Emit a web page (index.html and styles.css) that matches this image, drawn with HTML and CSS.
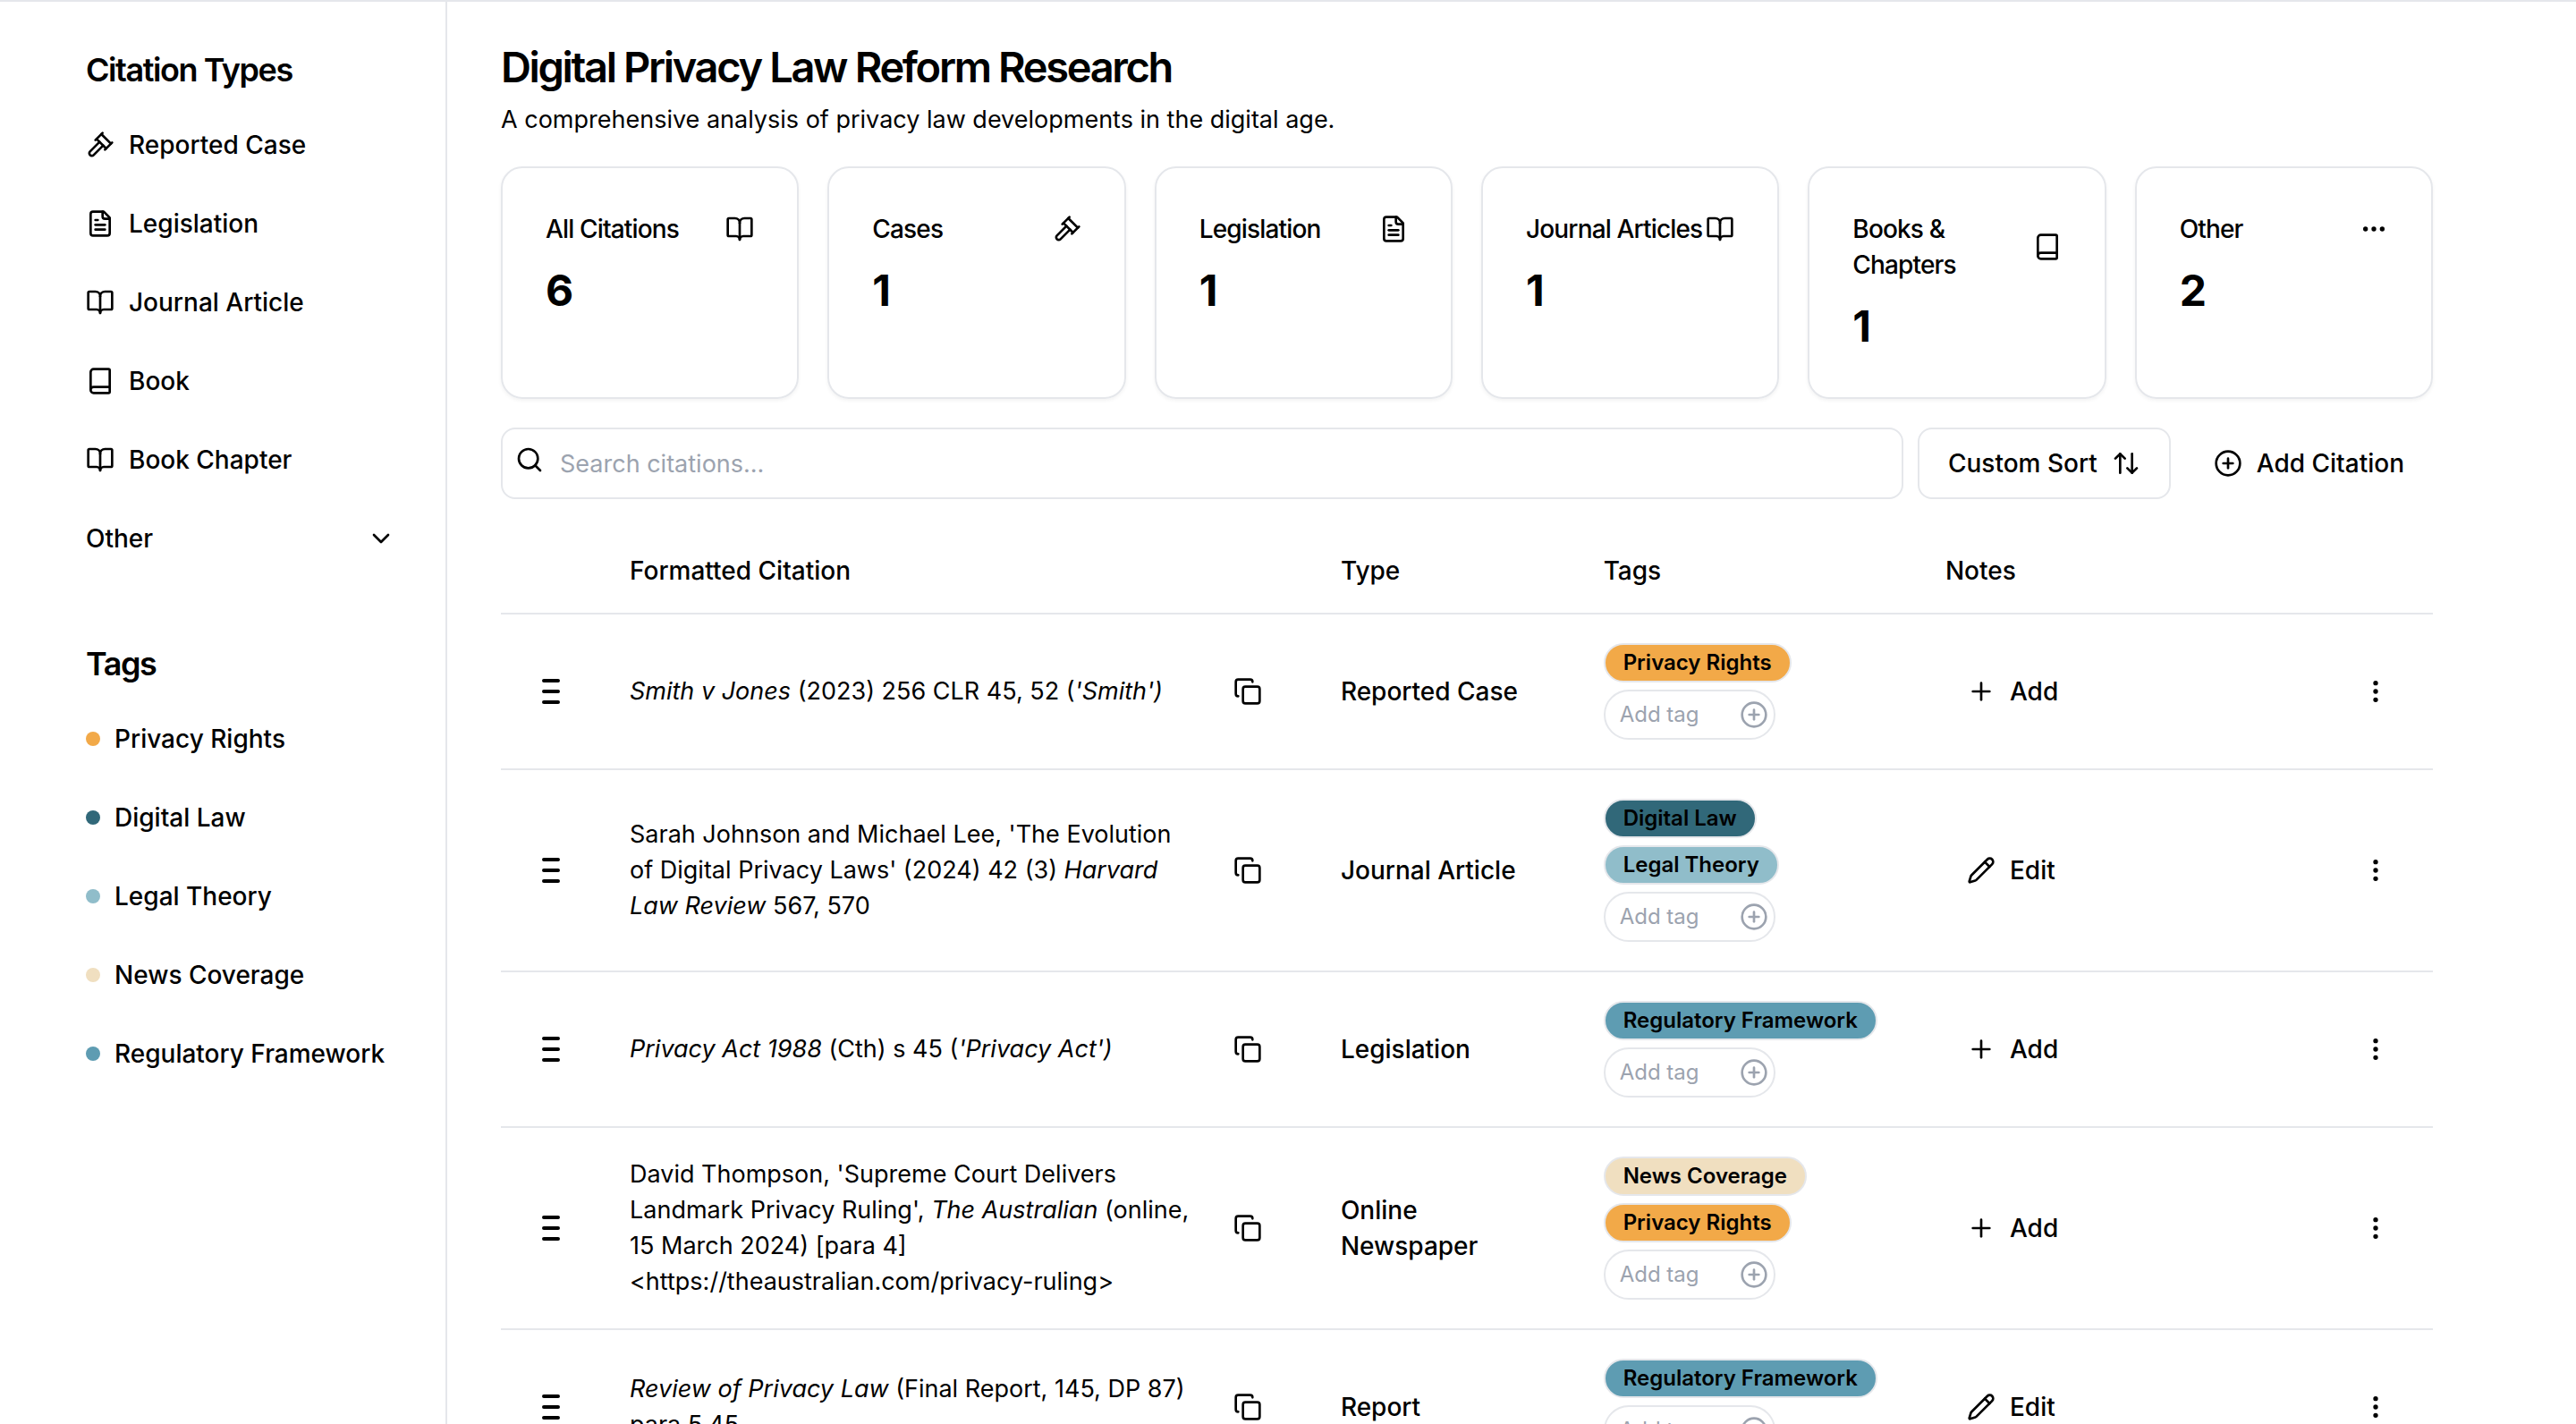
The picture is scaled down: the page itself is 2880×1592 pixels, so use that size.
FILE: index.html
```html
<!DOCTYPE html>
<html lang="en">
<head>
<meta charset="utf-8">
<title>Digital Privacy Law Reform Research</title>
<link rel="stylesheet" href="styles.css">
</head>
<body>
<svg class="sprite" aria-hidden="true">
  <symbol id="gavel" viewBox="0 0 24 24"><path d="m14.5 12.5-8 8a2.119 2.119 0 1 1-3-3l8-8"/><path d="m16 16 6-6"/><path d="m8 8 6-6"/><path d="m9 7 8 8"/><path d="m21 11-8-8"/></symbol>
  <symbol id="file" viewBox="0 0 24 24"><path d="M15 2H6a2 2 0 0 0-2 2v16a2 2 0 0 0 2 2h12a2 2 0 0 0 2-2V7Z"/><path d="M14 2v4a2 2 0 0 0 2 2h4"/><path d="M10 9H8"/><path d="M16 13H8"/><path d="M16 17H8"/></symbol>
  <symbol id="book-open" viewBox="0 0 24 24"><path d="M12 7v14"/><path d="M3 18a1 1 0 0 1-1-1V4a1 1 0 0 1 1-1h5a4 4 0 0 1 4 4 4 4 0 0 1 4-4h5a1 1 0 0 1 1 1v13a1 1 0 0 1-1 1h-6a3 3 0 0 0-3 3 3 3 0 0 0-3-3z"/></symbol>
  <symbol id="book" viewBox="0 0 24 24"><path d="M4 19.5v-15A2.5 2.5 0 0 1 6.5 2H19a1 1 0 0 1 1 1v18a1 1 0 0 1-1 1H6.5a1 1 0 0 1 0-5H20"/></symbol>
  <symbol id="chevron" viewBox="0 0 24 24"><path d="m6 9 6 6 6-6"/></symbol>
  <symbol id="dots" viewBox="0 0 24 24"><circle cx="12" cy="12" r="1"/><circle cx="19" cy="12" r="1"/><circle cx="5" cy="12" r="1"/></symbol>
  <symbol id="dots-v" viewBox="0 0 24 24"><circle cx="12" cy="12" r="1"/><circle cx="12" cy="5" r="1"/><circle cx="12" cy="19" r="1"/></symbol>
  <symbol id="search" viewBox="0 0 24 24"><circle cx="11" cy="11" r="8"/><path d="m21 21-4.3-4.3"/></symbol>
  <symbol id="sort" viewBox="0 0 24 24"><path d="m21 16-4 4-4-4"/><path d="M17 20V4"/><path d="m3 8 4-4 4 4"/><path d="M7 4v16"/></symbol>
  <symbol id="circle-plus" viewBox="0 0 24 24"><circle cx="12" cy="12" r="10"/><path d="M8 12h8"/><path d="M12 8v8"/></symbol>
  <symbol id="plus" viewBox="0 0 24 24"><path d="M5 12h14"/><path d="M12 5v14"/></symbol>
  <symbol id="pencil" viewBox="0 0 24 24"><path d="M21.174 6.812a1 1 0 0 0-3.986-3.987L3.842 16.174a2 2 0 0 0-.5.83l-1.321 4.352a.5.5 0 0 0 .623.622l4.353-1.32a2 2 0 0 0 .83-.497z"/><path d="m15 5 4 4"/></symbol>
  <symbol id="copy" viewBox="0 0 24 24"><rect width="14" height="14" x="8" y="8" rx="2" ry="2"/><path d="M4 16c-1.1 0-2-.9-2-2V4c0-1.1.9-2 2-2h10c1.1 0 2 .9 2 2"/></symbol>
  <symbol id="grip" viewBox="0 0 32 32"><path d="M8 4h16M8 16h16M8 28h16"/></symbol>
</svg>
<div class="app">
  <aside class="sidebar">
    <section class="group">
      <h2>Citation Types</h2>
      <button class="item"><svg class="icon"><use href="#gavel"/></svg>Reported Case</button>
      <button class="item"><svg class="icon"><use href="#file"/></svg>Legislation</button>
      <button class="item"><svg class="icon"><use href="#book-open"/></svg>Journal Article</button>
      <button class="item"><svg class="icon"><use href="#book"/></svg>Book</button>
      <button class="item"><svg class="icon"><use href="#book-open"/></svg>Book Chapter</button>
      <button class="item spread">Other<svg class="icon"><use href="#chevron"/></svg></button>
    </section>
    <section class="group">
      <h2>Tags</h2>
      <button class="item"><span class="dot privacy"></span>Privacy Rights</button>
      <button class="item"><span class="dot digital"></span>Digital Law</button>
      <button class="item"><span class="dot theory"></span>Legal Theory</button>
      <button class="item"><span class="dot news"></span>News Coverage</button>
      <button class="item"><span class="dot regulatory"></span>Regulatory Framework</button>
    </section>
  </aside>
  <main class="main">
    <header class="intro">
      <h1>Digital Privacy Law Reform Research</h1>
      <p>A comprehensive analysis of privacy law developments in the digital age.</p>
    </header>
    <section class="cards">
      <article class="card"><div class="card-head"><h3>All Citations</h3><svg class="icon"><use href="#book-open"/></svg></div><p class="count">6</p></article>
      <article class="card"><div class="card-head"><h3>Cases</h3><svg class="icon"><use href="#gavel"/></svg></div><p class="count">1</p></article>
      <article class="card"><div class="card-head"><h3>Legislation</h3><svg class="icon"><use href="#file"/></svg></div><p class="count">1</p></article>
      <article class="card"><div class="card-head"><h3>Journal Articles</h3><svg class="icon"><use href="#book-open"/></svg></div><p class="count">1</p></article>
      <article class="card"><div class="card-head"><h3>Books &amp; Chapters</h3><svg class="icon"><use href="#book"/></svg></div><p class="count">1</p></article>
      <article class="card"><div class="card-head"><h3>Other</h3><svg class="icon"><use href="#dots"/></svg></div><p class="count">2</p></article>
    </section>
    <div class="toolbar">
      <div class="search"><svg class="icon"><use href="#search"/></svg><input type="search" aria-label="Search citations" placeholder="Search citations..."></div>
      <button class="btn outline">Custom Sort<svg class="icon"><use href="#sort"/></svg></button>
      <button class="btn"><svg class="icon"><use href="#circle-plus"/></svg>Add Citation</button>
    </div>
    <table class="citations">
      <colgroup><col class="c-grip"><col class="c-cite"><col class="c-type"><col class="c-tags"><col class="c-notes"><col class="c-menu"></colgroup>
      <thead>
        <tr><th></th><th>Formatted Citation</th><th>Type</th><th>Tags</th><th>Notes</th><th></th></tr>
      </thead>
      <tbody>
        <tr>
          <td class="center"><svg class="icon grip"><use href="#grip"/></svg></td>
          <td><div class="cite"><p><em>Smith v Jones</em> (2023) 256 CLR 45, 52 (<em>'Smith')</em></p><button class="btn icon-btn" aria-label="Copy citation"><svg class="icon"><use href="#copy"/></svg></button></div></td>
          <td class="type">Reported Case</td>
          <td><div class="tags"><span class="badge privacy">Privacy Rights</span><label class="add-tag"><input aria-label="Add tag" placeholder="Add tag"><svg class="icon"><use href="#circle-plus"/></svg></label></div></td>
          <td><button class="btn note"><svg class="icon"><use href="#plus"/></svg>Add</button></td>
          <td class="center"><button class="btn icon-btn" aria-label="More"><svg class="icon"><use href="#dots-v"/></svg></button></td>
        </tr>
        <tr>
          <td class="center"><svg class="icon grip"><use href="#grip"/></svg></td>
          <td><div class="cite"><p>Sarah Johnson and Michael Lee, 'The Evolution of Digital Privacy Laws' (2024) 42 (3) <em>Harvard Law Review</em> 567, 570</p><button class="btn icon-btn" aria-label="Copy citation"><svg class="icon"><use href="#copy"/></svg></button></div></td>
          <td class="type">Journal Article</td>
          <td><div class="tags"><span class="badge digital">Digital Law</span><span class="badge theory">Legal Theory</span><label class="add-tag"><input aria-label="Add tag" placeholder="Add tag"><svg class="icon"><use href="#circle-plus"/></svg></label></div></td>
          <td><button class="btn note"><svg class="icon"><use href="#pencil"/></svg>Edit</button></td>
          <td class="center"><button class="btn icon-btn" aria-label="More"><svg class="icon"><use href="#dots-v"/></svg></button></td>
        </tr>
        <tr>
          <td class="center"><svg class="icon grip"><use href="#grip"/></svg></td>
          <td><div class="cite"><p><em>Privacy Act 1988</em> (Cth) s 45 (<em>'Privacy Act')</em></p><button class="btn icon-btn" aria-label="Copy citation"><svg class="icon"><use href="#copy"/></svg></button></div></td>
          <td class="type">Legislation</td>
          <td><div class="tags"><span class="badge regulatory">Regulatory Framework</span><label class="add-tag"><input aria-label="Add tag" placeholder="Add tag"><svg class="icon"><use href="#circle-plus"/></svg></label></div></td>
          <td><button class="btn note"><svg class="icon"><use href="#plus"/></svg>Add</button></td>
          <td class="center"><button class="btn icon-btn" aria-label="More"><svg class="icon"><use href="#dots-v"/></svg></button></td>
        </tr>
        <tr>
          <td class="center"><svg class="icon grip"><use href="#grip"/></svg></td>
          <td><div class="cite"><p>David Thompson, 'Supreme Court Delivers Landmark Privacy Ruling', <em>The Australian</em> (online, 15 March 2024) [para 4] &lt;https://theaustralian.com/privacy-ruling&gt;</p><button class="btn icon-btn" aria-label="Copy citation"><svg class="icon"><use href="#copy"/></svg></button></div></td>
          <td class="type">Online Newspaper</td>
          <td><div class="tags"><span class="badge news">News Coverage</span><span class="badge privacy">Privacy Rights</span><label class="add-tag"><input aria-label="Add tag" placeholder="Add tag"><svg class="icon"><use href="#circle-plus"/></svg></label></div></td>
          <td><button class="btn note"><svg class="icon"><use href="#plus"/></svg>Add</button></td>
          <td class="center"><button class="btn icon-btn" aria-label="More"><svg class="icon"><use href="#dots-v"/></svg></button></td>
        </tr>
        <tr>
          <td class="center"><svg class="icon grip"><use href="#grip"/></svg></td>
          <td><div class="cite"><p><em>Review of Privacy Law</em> (Final Report, 145, DP 87) para 5.45</p><button class="btn icon-btn" aria-label="Copy citation"><svg class="icon"><use href="#copy"/></svg></button></div></td>
          <td class="type">Report</td>
          <td><div class="tags"><span class="badge regulatory">Regulatory Framework</span><label class="add-tag"><input aria-label="Add tag" placeholder="Add tag"><svg class="icon"><use href="#circle-plus"/></svg></label></div></td>
          <td><button class="btn note"><svg class="icon"><use href="#pencil"/></svg>Edit</button></td>
          <td class="center"><button class="btn icon-btn" aria-label="More"><svg class="icon"><use href="#dots-v"/></svg></button></td>
        </tr>
      </tbody>
    </table>
  </main>
</div>
</body>
</html>
```

FILE: styles.css
```css
:root {
  --border: #e5e7eb;
  --muted: #9ca3af;
}

* { box-sizing: border-box; }

body {
  margin: 0;
  background: #fff;
  color: #000;
  font: 400 27px/40px Inter, "Liberation Sans", sans-serif;
}

h1, h2, h3, p { margin: 0; }
button, input { font: inherit; color: inherit; }
.sprite { display: none; }

.icon {
  width: 32px;
  height: 32px;
  flex: none;
  display: block;
  fill: none;
  stroke: currentColor;
  stroke-width: 2;
  stroke-linecap: round;
  stroke-linejoin: round;
}

.app {
  display: flex;
  height: 100vh;
  overflow: hidden;
  border-top: 2px solid var(--border);
}

/* Sidebar */
.sidebar {
  flex: none;
  width: 500px;
  padding: 48px 56px 48px 96px;
  border-right: 2px solid var(--border);
  display: flex;
  flex-direction: column;
  gap: 72px;
}

.group {
  display: flex;
  flex-direction: column;
  gap: 8px;
}

.group h2 {
  margin-bottom: 8px;
  font-size: 36px;
  font-weight: 600;
  line-height: 56px;
  letter-spacing: -0.04em;
}

.item {
  display: flex;
  align-items: center;
  gap: 16px;
  height: 80px;
  padding: 0;
  border: 0;
  background: none;
  font-size: 28px;
  font-weight: 500;
  text-align: left;
  white-space: nowrap;
}

.spread { justify-content: space-between; }

.dot {
  width: 16px;
  height: 16px;
  border-radius: 50%;
}

.privacy { background: #f2a948; }
.digital { background: #316879; }
.theory { background: #90bdca; }
.news { background: #f0dfc0; }
.regulatory { background: #5e9cb2; }

/* Main column */
.main {
  flex: 1;
  min-width: 0;
  padding: 40px 160px 0 60px;
  display: flex;
  flex-direction: column;
  gap: 32px;
  overflow: hidden;
}

.intro h1 {
  font-size: 47px;
  font-weight: 600;
  line-height: 66px;
  letter-spacing: -0.05em;
}

.intro p { margin-top: 6px; }

.cards {
  display: grid;
  grid-template-columns: repeat(6, 1fr);
  gap: 32px;
}

.card {
  padding: 48px;
  border: 2px solid var(--border);
  border-radius: 24px;
  box-shadow: 0 2px 4px rgba(0, 0, 0, 0.05);
}

.card-head {
  display: flex;
  align-items: center;
  justify-content: space-between;
  padding-bottom: 16px;
}

.card h3 {
  font-size: 28px;
  font-weight: 500;
  letter-spacing: -0.03em;
}

.count {
  font-size: 48px;
  font-weight: 700;
  line-height: 66px;
  margin-bottom: -2px;
}

.toolbar {
  display: flex;
  gap: 16px;
}

.search {
  position: relative;
  flex: 1;
}

.search .icon {
  position: absolute;
  left: 16px;
  top: 20px;
}

.search input {
  width: 100%;
  height: 80px;
  padding: 0 24px 0 64px;
  border: 2px solid var(--border);
  border-radius: 16px;
  background: none;
  appearance: none;
}

input::placeholder {
  color: var(--muted);
  opacity: 1;
}

.btn {
  display: flex;
  align-items: center;
  justify-content: center;
  gap: 16px;
  height: 80px;
  padding: 0 32px;
  border: 0;
  border-radius: 16px;
  background: none;
  font-size: 28px;
  font-weight: 500;
  white-space: nowrap;
}

.outline { border: 2px solid var(--border); }
.icon-btn { flex: none; width: 80px; padding: 0; }
.note { height: 72px; padding: 0 24px; }

/* Citation table */
.citations {
  width: 100%;
  table-layout: fixed;
  border-collapse: collapse;
}

.c-grip { width: 112px; }
.c-cite { width: 36.8%; }
.c-type { width: 13.6%; }
.c-tags { width: 17.7%; }
.c-menu { width: 128px; }

.citations tr { border-bottom: 2px solid var(--border); }

.citations th {
  height: 96px;
  padding: 0 32px;
  font-size: 28px;
  font-weight: 500;
  text-align: left;
}

.citations td {
  padding: 32px;
  vertical-align: middle;
}

.citations .center { padding: 0; }
.center .icon, .center .btn { margin: 0 auto; }
.citations .type { font-size: 28px; font-weight: 500; }
.grip { stroke-width: 4; }

.cite {
  display: flex;
  align-items: center;
  justify-content: space-between;
  gap: 16px;
}

.tags {
  display: flex;
  flex-direction: column;
  align-items: flex-start;
  gap: 8px;
}

.badge {
  padding: 4px 20px;
  border: 2px solid var(--border);
  border-radius: 22px;
  font-size: 24px;
  font-weight: 600;
  line-height: 32px;
  white-space: nowrap;
}

.add-tag {
  display: flex;
  align-items: center;
  width: 192px;
  height: 56px;
  padding: 0 6px 0 16px;
  border: 2px solid var(--border);
  border-radius: 28px;
  color: var(--muted);
}

.add-tag input {
  flex: 1;
  min-width: 0;
  padding: 0;
  border: 0;
  background: none;
  font-size: 24px;
  line-height: 32px;
}
```
